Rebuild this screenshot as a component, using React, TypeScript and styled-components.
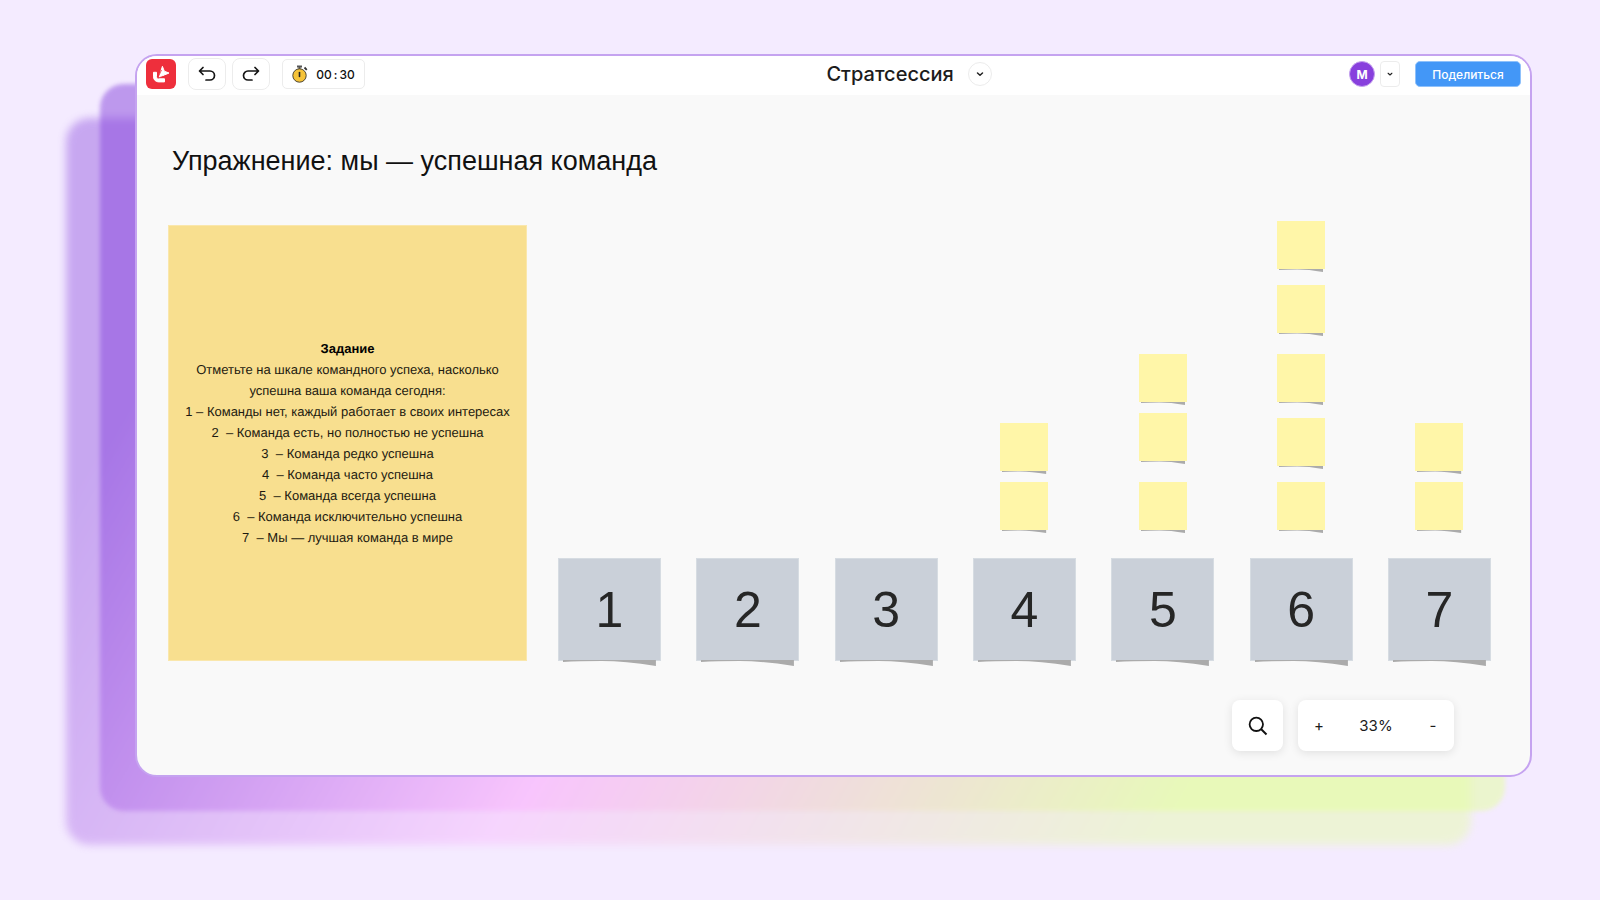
import React, { useState } from "react";
import styled, { createGlobalStyle, css } from "styled-components";

const GlobalStyle = createGlobalStyle`
  *, *::before, *::after { box-sizing: border-box; }
  body {
    margin: 0;
    background: #f4ebff;
    color: #1c1c1c;
    font-family: "Liberation Sans", Arial, sans-serif;
  }
  button { font: inherit; color: inherit; padding: 0; cursor: pointer; }
  h1, h2, p, ol { margin: 0; padding: 0; }
`;

const Page = styled.main`
  display: flex;
  min-height: 100vh;
  padding: 54px 68px 123px 135px;
`;

const Frame = styled.div`
  position: relative;
  isolation: isolate;
  display: flex;
  flex: 1;
  min-width: 0;
`;

const Glow = styled.div<{ $shift: number; $soft: number; $alpha: number }>`
  position: absolute;
  z-index: -1;
  inset: ${(p) => p.$shift - 4}px ${(p) => p.$shift - 7}px ${(p) => -p.$shift}px ${(p) => -p.$shift - 1}px;
  border-radius: 24px;
  background: linear-gradient(120deg, #8847dd 0%, #8847dd 12%, #fab6fd 46%, #e4ff9e 82%);
  opacity: ${(p) => p.$alpha};
  filter: blur(${(p) => p.$soft}px);
`;

const Window = styled.section`
  display: flex;
  flex: 1;
  flex-direction: column;
  min-width: 0;
  overflow: hidden;
  border: 2px solid #c5a3f0;
  border-radius: 22px;
  background: #f9f9f9;
`;

const TopBar = styled.header`
  display: grid;
  grid-template-columns: 9fr auto 7fr;
  align-items: center;
  height: 39px;
  padding: 0 9px 3px;
  background: #fff;
`;

const Group = styled.div<{ $end?: boolean; $gap: number }>`
  display: flex;
  align-items: center;
  justify-content: ${(p) => (p.$end ? "flex-end" : "flex-start")};
  gap: ${(p) => p.$gap}px;
`;

const LogoLink = styled.a`
  display: block;
  width: 30px;
  height: 30px;
  margin-right: 6px;
`;

const outlined = css`
  display: flex;
  align-items: center;
  justify-content: center;
  border: 1px solid #ececec;
  background: #fff;
`;

const ToolButton = styled.button`
  ${outlined}
  width: 38px;
  height: 32px;
  border-radius: 8px;
`;

const TimerButton = styled.button`
  ${outlined}
  gap: 8px;
  width: 83px;
  height: 30px;
  margin-left: 6px;
  border-radius: 5px;
  color: #111;
  font: 500 12px Inter, sans-serif;
`;

const Colon = styled.span`
  padding: 0 2px;
`;

const BoardName = styled.h1`
  color: #1c1c1c;
  font: 500 20px/24px Inter, sans-serif;
`;

const RoundButton = styled.button`
  ${outlined}
  width: 24px;
  height: 24px;
  border-radius: 50%;
`;

const SmallButton = styled.button`
  ${outlined}
  width: 20px;
  height: 26px;
  border-radius: 4px;
`;

const Avatar = styled.span`
  display: flex;
  align-items: center;
  justify-content: center;
  width: 26px;
  height: 26px;
  border: 1px solid #c5a3ee;
  border-radius: 50%;
  background: #8840dd;
  color: #fff;
  font: 700 12px Inter, sans-serif;
`;

const ShareButton = styled.button`
  width: 106px;
  height: 26px;
  margin-left: 10px;
  border: 1px solid #8fc1fb;
  border-radius: 5px;
  background: #4397f7;
  color: #fff;
  font: 500 12px Inter, sans-serif;
`;

const Board = styled.div`
  display: flex;
  flex: 1;
  flex-direction: column;
  padding: 48px 39px 24px 31px;
`;

const Title = styled.h2`
  padding-left: 4px;
  color: #111;
  font-size: 27px;
  font-weight: 400;
  line-height: 36px;
`;

const Exercise = styled.div`
  display: flex;
  gap: 31px;
  height: 448px;
  margin-top: 41px;
`;

const Task = styled.article`
  display: flex;
  flex: 0 0 359px;
  flex-direction: column;
  justify-content: center;
  height: 436px;
  margin-top: 5px;
  border: 1px solid #fae7ac;
  background: #f8df8f;
  color: #1d1a10;
  font-size: 13px;
  line-height: 21px;
  text-align: center;
  text-rendering: geometricPrecision;
`;

const TaskTitle = styled.h3`
  margin: 0;
  color: #000;
  font-size: 13px;
`;

const TaskText = styled.p`
  padding: 0 24px;
`;

const Levels = styled.ol`
  list-style: none;
  white-space: pre;
`;

const Scale = styled.div`
  display: flex;
  flex: 1;
  justify-content: space-between;
  min-width: 0;
`;

const Column = styled.div`
  display: flex;
  flex-direction: column;
  align-items: center;
  justify-content: flex-end;
`;

const paper = css`
  position: relative;
  & > svg {
    position: absolute;
    top: 100%;
    left: 4%;
    width: 92%;
  }
`;

const Vote = styled.div<{ $gap: number }>`
  ${paper}
  width: 48px;
  height: 48px;
  margin-bottom: ${(p) => p.$gap}px;
  background: #fff6a8;
  & > svg { height: 3px; }
`;

const Mark = styled.div`
  ${paper}
  display: flex;
  align-items: center;
  justify-content: center;
  width: 103px;
  height: 103px;
  margin-bottom: 7px;
  border: 1px solid #d6dce2;
  background: #cad0d9;
  color: #262626;
  font-size: 50px;
  line-height: 56px;
  & > svg { height: 6px; }
`;

const Controls = styled.div`
  display: flex;
  justify-content: flex-end;
  gap: 15px;
  margin: auto 37px 0 0;
`;

const raised = css`
  height: 51px;
  border: 0;
  border-radius: 8px;
  background: #fff;
  box-shadow: 0 2px 10px rgba(0, 0, 0, 0.1);
`;

const SearchButton = styled.button`
  ${raised}
  display: flex;
  align-items: center;
  justify-content: center;
  width: 51px;
`;

const ZoomBar = styled.div`
  ${raised}
  display: flex;
  align-items: center;
  justify-content: space-between;
  width: 156px;
  padding: 0 10px;
  color: #1c1c1c;
  font: 400 15px Inter, sans-serif;
`;

const StepButton = styled.button`
  width: 22px;
  height: 32px;
  border: 0;
  background: none;
`;

const Logo = () => (
  <svg width="30" height="30" viewBox="0 0 30 30" aria-hidden="true">
    <rect width="30" height="30" rx="6" fill="#ee2f3c" />
    <path
      d="M7.500 13.300H10.500V17.600A2.200 2.200 0 0 0 12.700 19.800H18.500V22.900H12.500A5 5 0 0 1 7.500 17.900Z"
      fill="#fff"
      stroke="#fff"
      strokeLinejoin="round"
    />
    <path
      d="M16.400 7.300L18.300 12.200 23 14 13 18.300Z"
      fill="#fff"
      stroke="#fff"
      strokeLinejoin="round"
    />
    <path d="M11.500 19.300L15.500 11M12 19L20 16.800" stroke="#ee2f3c" strokeWidth="0.800" />
  </svg>
);

const Turn = ({ forward }: { forward?: boolean }) => (
  <svg
    width="18"
    height="16"
    viewBox="0 0 18 16"
    fill="none"
    stroke="#151515"
    strokeWidth="1.700"
    strokeLinecap="round"
    strokeLinejoin="round"
    aria-hidden="true"
  >
    {forward ? (
      <path d="M13 1.500L16.500 5 13 8.500M16 5H6a4.500 4.500 0 0 0 0 9h4" />
    ) : (
      <path d="M5 1.500L1.500 5 5 8.500M2 5h10a4.500 4.500 0 0 1 0 9H8" />
    )}
  </svg>
);

const Stopwatch = () => (
  <svg width="16" height="18" viewBox="0 0 16 18" aria-hidden="true">
    <path d="M5 1.500h5M7.500 1.500v2.500" stroke="#555" strokeWidth="2" />
    <path d="M12.500 2.500l2.300 2.300" stroke="#333" strokeWidth="1.800" />
    <circle cx="7.500" cy="10.500" r="6.700" fill="#f6c338" stroke="#4c4635" />
    <path d="M7.500 7.500v4" stroke="#222" strokeWidth="1.600" strokeLinecap="round" />
  </svg>
);

const Chevron = ({ size }: { size: number }) => (
  <svg
    width={size}
    height={size}
    viewBox="0 0 8 8"
    fill="none"
    stroke="#222"
    strokeWidth="1.500"
    strokeLinecap="round"
    strokeLinejoin="round"
    aria-hidden="true"
  >
    <path d="M1.500 3L4 5.300 6.500 3" />
  </svg>
);

const Magnifier = () => (
  <svg width="20" height="20" viewBox="0 0 20 20" fill="none" stroke="#111" strokeWidth="1.800" aria-hidden="true">
    <circle cx="8.300" cy="8.300" r="6.700" />
    <path d="M13 13l5.500 5.500" strokeWidth="2" />
  </svg>
);

const Curl = () => (
  <svg viewBox="0 0 96 6" preserveAspectRatio="none" aria-hidden="true">
    <path d="M0 0H96V6Q64 1 40 1T0 2z" fill="#ababab" />
  </svg>
);

const levels = [
  "1 – Команды нет, каждый работает в своих интересах",
  "2  – Команда есть, но полностью не успешна",
  "3  – Команда редко успешна",
  "4  – Команда часто успешна",
  "5  – Команда всегда успешна",
  "6  – Команда исключительно успешна",
  "7  – Мы — лучшая команда в мире",
];

// Each number is the space under one vote, listed from the top of the stack.
const columns: { mark: number; votes: number[] }[] = [
  { mark: 1, votes: [] },
  { mark: 2, votes: [] },
  { mark: 3, votes: [] },
  { mark: 4, votes: [11, 28] },
  { mark: 5, votes: [11, 21, 28] },
  { mark: 6, votes: [16, 21, 16, 16, 28] },
  { mark: 7, votes: [11, 28] },
];

export default function App() {
  const [zoom, setZoom] = useState(33);
  return (
    <>
      <GlobalStyle />
      <Page>
        <Frame>
          <Glow $shift={68} $soft={4} $alpha={0.41} />
          <Glow $shift={34} $soft={2} $alpha={0.5} />
          <Window>
            <TopBar>
              <Group $gap={6}>
                <LogoLink href="#" aria-label="Главная">
                  <Logo />
                </LogoLink>
                <ToolButton aria-label="Отменить">
                  <Turn />
                </ToolButton>
                <ToolButton aria-label="Повторить">
                  <Turn forward />
                </ToolButton>
                <TimerButton>
                  <Stopwatch />
                  <span>
                    00<Colon>:</Colon>30
                  </span>
                </TimerButton>
              </Group>
              <Group $gap={14}>
                <BoardName>Стратсессия</BoardName>
                <RoundButton aria-label="Меню доски">
                  <Chevron size={8} />
                </RoundButton>
              </Group>
              <Group $gap={5} $end>
                <Avatar>M</Avatar>
                <SmallButton aria-label="Участники">
                  <Chevron size={6} />
                </SmallButton>
                <ShareButton>Поделиться</ShareButton>
              </Group>
            </TopBar>
            <Board>
              <Title>Упражнение: мы — успешная команда</Title>
              <Exercise>
                <Task>
                  <TaskTitle>Задание</TaskTitle>
                  <TaskText>Отметьте на шкале командного успеха, насколько успешна ваша команда сегодня:</TaskText>
                  <Levels>
                    {levels.map((level) => (
                      <li key={level}>{level}</li>
                    ))}
                  </Levels>
                </Task>
                <Scale>
                  {columns.map(({ mark, votes }) => (
                    <Column key={mark}>
                      {votes.map((gap, i) => (
                        <Vote key={i} $gap={gap}>
                          <Curl />
                        </Vote>
                      ))}
                      <Mark>
                        {mark}
                        <Curl />
                      </Mark>
                    </Column>
                  ))}
                </Scale>
              </Exercise>
              <Controls>
                <SearchButton aria-label="Поиск">
                  <Magnifier />
                </SearchButton>
                <ZoomBar>
                  <StepButton aria-label="Увеличить" onClick={() => setZoom(zoom + 1)}>
                    +
                  </StepButton>
                  <span>{zoom}%</span>
                  <StepButton aria-label="Уменьшить" onClick={() => setZoom(zoom - 1)}>
                    -
                  </StepButton>
                </ZoomBar>
              </Controls>
            </Board>
          </Window>
        </Frame>
      </Page>
    </>
  );
}
